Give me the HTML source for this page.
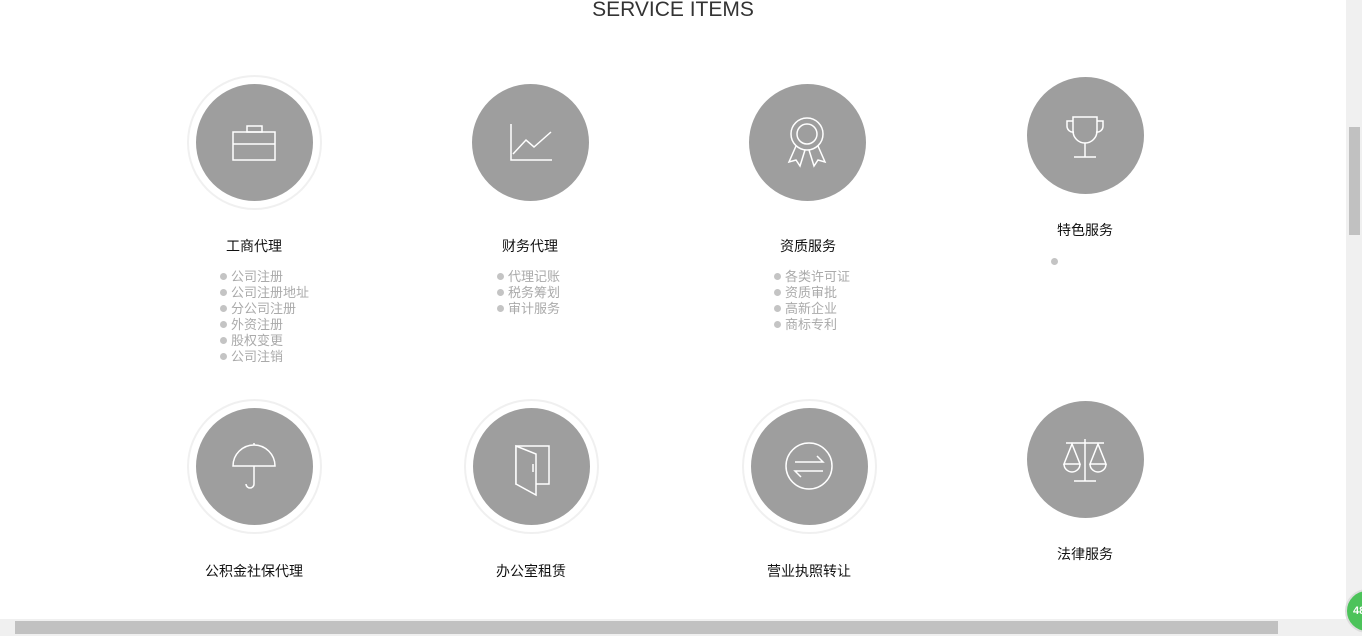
<!DOCTYPE html>
<html><head><meta charset="utf-8"><style>
body{margin:0;width:1362px;height:636px;overflow:hidden;background:#fff;font-family:"Liberation Sans","Noto Sans CJK SC",sans-serif;position:relative}
.h{position:absolute;top:-2px;left:0;width:1346px;text-align:center;font-size:21px;color:#333}
.c{position:absolute;width:117px;height:117px;border-radius:50%;background:#9e9e9e}
.r{box-shadow:0 0 0 7px #fff,0 0 0 9px #f0f0f0}
.c svg{position:absolute;left:0;top:0}
.t{position:absolute;width:200px;text-align:center;font-size:14px;color:#111}
ul{position:absolute;margin:0;padding:0;list-style:none;font-size:13px;color:#aaa;line-height:16px}
li:before{content:"";display:inline-block;width:7px;height:7px;border-radius:50%;background:#c4c4c4;margin-right:4px;vertical-align:1px}
</style></head><body>
<div class="h">SERVICE ITEMS</div>

<div class="c r" style="left:196px;top:84px"><svg width="117" height="117" fill="none" stroke="#fff" stroke-width="1.5"><rect x="37" y="48" width="42" height="28"/><rect x="51" y="42" width="15" height="6"/><line x1="37" y1="60" x2="79" y2="60"/></svg></div>
<div class="t" style="left:154px;top:236px">工商代理</div>
<ul style="left:220px;top:269px"><li>公司注册</li><li>公司注册地址</li><li>分公司注册</li><li>外资注册</li><li>股权变更</li><li>公司注销</li></ul>

<div class="c" style="left:472px;top:84px"><svg width="117" height="117" fill="none" stroke="#fff" stroke-width="1.5"><polyline points="39,40 39,76 80,76"/><polyline points="41,70 54,56 62,63 79,48"/></svg></div>
<div class="t" style="left:430px;top:236px">财务代理</div>
<ul style="left:497px;top:269px"><li>代理记账</li><li>税务筹划</li><li>审计服务</li></ul>

<div class="c" style="left:749px;top:84px"><svg width="117" height="117" fill="none" stroke="#fff" stroke-width="1.5"><circle cx="58" cy="50" r="16"/><circle cx="58" cy="50" r="10"/><polyline points="47,62 40,78 47,76 51,82 56,66"/><polyline points="69,62 76,78 69,76 65,82 60,66"/></svg></div>
<div class="t" style="left:708px;top:236px">资质服务</div>
<ul style="left:774px;top:269px"><li>各类许可证</li><li>资质审批</li><li>高新企业</li><li>商标专利</li></ul>

<div class="c" style="left:1027px;top:77px"><svg width="117" height="117" fill="none" stroke="#fff" stroke-width="1.5"><path d="M46 40h24v14a12 12 0 0 1-24 0z"/><path d="M46 44h-6v5a6 6 0 0 0 7 6M70 44h6v5a6 6 0 0 1-7 6"/><line x1="58" y1="66" x2="58" y2="80"/><line x1="47" y1="80" x2="69" y2="80"/></svg></div>
<div class="t" style="left:985px;top:220px">特色服务</div>
<ul style="left:1051px;top:254px"><li></li></ul>

<div class="c r" style="left:196px;top:408px"><svg width="117" height="117" fill="none" stroke="#fff" stroke-width="1.5"><path d="M37 58a21 21 0 0 1 42 0z"/><line x1="58" y1="35" x2="58" y2="37"/><path d="M58 58v18a4 4 0 0 1-8 0"/></svg></div>
<div class="t" style="left:154px;top:561px">公积金社保代理</div>

<div class="c r" style="left:473px;top:408px"><svg width="117" height="117" fill="none" stroke="#fff" stroke-width="1.5"><rect x="43" y="38" width="33" height="38"/><polygon points="43,38 63,46 63,87 43,76" fill="#9e9e9e"/><line x1="60" y1="56" x2="60" y2="64"/></svg></div>
<div class="t" style="left:431px;top:561px">办公室租赁</div>

<div class="c r" style="left:751px;top:408px"><svg width="117" height="117" fill="none" stroke="#fff" stroke-width="1.5"><circle cx="58" cy="58" r="23"/><polyline points="44,54 72,54 66,48"/><polyline points="72,63 44,63 50,69"/></svg></div>
<div class="t" style="left:709px;top:561px">营业执照转让</div>

<div class="c" style="left:1027px;top:401px"><svg width="117" height="117" fill="none" stroke="#fff" stroke-width="1.5"><line x1="58" y1="38" x2="58" y2="80"/><line x1="39" y1="42" x2="77" y2="42"/><line x1="47" y1="80" x2="69" y2="80"/><path d="M45 43l-8 20h16z M37 63a8 8 0 0 0 16 0"/><path d="M71 43l-8 20h16z M63 63a8 8 0 0 0 16 0"/></svg></div>
<div class="t" style="left:985px;top:544px">法律服务</div>

<div style="position:absolute;left:1346px;top:0;width:16px;height:636px;background:#f0f0f0"></div>
<div style="position:absolute;left:1349px;top:127px;width:11px;height:108px;background:#c1c1c1"></div>
<div style="position:absolute;left:0;top:619px;width:1346px;height:17px;background:#f0f0f0"></div>
<div style="position:absolute;left:15px;top:621px;width:1263px;height:13px;background:#c1c1c1"></div>
<div style="position:absolute;left:1345px;top:589px;width:40px;height:40px;border-radius:50%;background:#4cc35a;border:2px solid #ddd;color:#fff;font-size:11px;font-weight:bold;line-height:40px;text-indent:6px">48</div>
</body></html>
